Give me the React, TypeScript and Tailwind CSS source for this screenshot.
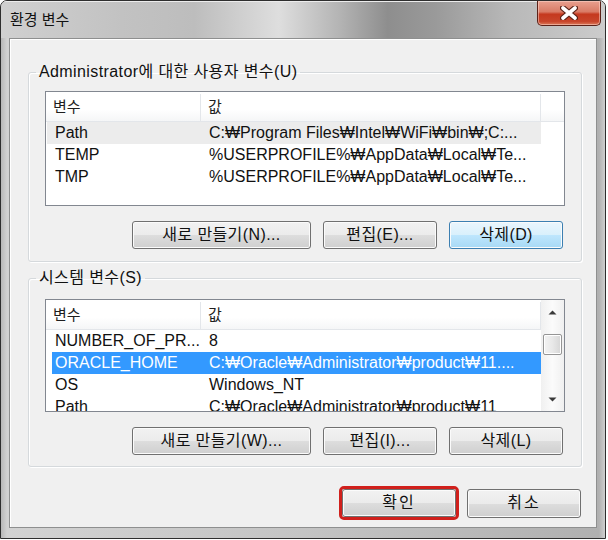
import { ReactNode } from "react";

const FONT = "font-['Liberation_Sans','Noto_Sans_CJK_KR',sans-serif]";

type BtnProps = {
  children: ReactNode;
  className?: string;
  hover?: boolean;
};

const Btn = ({ children, className = "", hover = false }: BtnProps) => (
  <button
    className={
      "flex h-[28px] items-center justify-center rounded-[3px] border text-[16px] tracking-[0.4px] text-[#111] shadow-[inset_0_0_0_1px_#fbfbfb] " +
      (hover
        ? "border-[#3c7fb1] bg-[linear-gradient(180deg,#eaf6fd_0%,#d9f0fc_50%,#bee6fd_51%,#a7d9f5_100%)] "
        : "border-[#707070] bg-[linear-gradient(180deg,#f2f2f2_0%,#ebebeb_50%,#dddddd_51%,#cfcfcf_100%)] ") +
      className
    }
  >
    {children}
  </button>
);

type Row = { name: string; value: string; selected?: boolean; hot?: boolean };

const userRows: Row[] = [
  { name: "Path", value: "C:₩Program Files₩Intel₩WiFi₩bin₩;C:...", hot: true },
  { name: "TEMP", value: "%USERPROFILE%₩AppData₩Local₩Te..." },
  { name: "TMP", value: "%USERPROFILE%₩AppData₩Local₩Te..." },
];

const systemRows: Row[] = [
  { name: "NUMBER_OF_PR...", value: "8" },
  { name: "ORACLE_HOME", value: "C:₩Oracle₩Administrator₩product₩11....", selected: true },
  { name: "OS", value: "Windows_NT" },
  { name: "Path", value: "C:₩Oracle₩Administrator₩product₩11" },
];

const Header = () => (
  <div className="flex h-[30px] shrink-0 border-b border-[#e3e6ea] bg-[linear-gradient(180deg,#ffffff_0%,#ffffff_60%,#f5f6f7_100%)] pt-[2px] text-[15px] text-[#1e1e1e]">
    <div className="flex w-[155px] items-center border-r border-[#e3e6ea] pl-[7px]">변수</div>
    <div className="flex w-[340px] items-center border-r border-[#e3e6ea] pl-[7px]">값</div>
  </div>
);

const ListRow = ({ row, inset }: { row: Row; inset: boolean }) => (
  <div
    className={
      "flex h-[22px] shrink-0 items-center text-[16px] leading-[22px] " +
      (inset ? "ml-[6px] w-[489px] " : "ml-[1px] w-[494px] ") +
      (row.selected ? "bg-[#3399ff] text-white " : row.hot ? "bg-[#ececec] text-[#111] " : "text-[#111] ")
    }
  >
    <div className={"shrink-0 whitespace-nowrap " + (inset ? "w-[149px] pl-[3px]" : "w-[154px] pl-[8px]")}>
      {row.name}
    </div>
    <div className="overflow-hidden whitespace-nowrap pl-[8px]">{row.value}</div>
  </div>
);

const Arrow = ({ up }: { up: boolean }) => (
  <svg width="9" height="5" viewBox="0 0 9 5">
    <path d={up ? "M0.5 4.5 L4.5 0.5 L8.5 4.5 Z" : "M0.5 0.5 L4.5 4.5 L8.5 0.5 Z"} fill="#3a3a3a" />
  </svg>
);

const ScrollBar = () => (
  <div className="flex w-[23px] shrink-0 flex-col items-center bg-[linear-gradient(90deg,#f0f0f0_0%,#fbfbfb_50%,#f0f0f0_100%)]">
    <div className="flex h-[24px] items-center justify-center">
      <Arrow up />
    </div>
    <div className="mt-[10px] h-[21px] w-[19px] rounded-[2px] border border-[#959595] bg-[linear-gradient(90deg,#f3f3f3_0%,#e8e8e8_50%,#d6d6d6_100%)] shadow-[inset_0_0_0_1px_#ffffff]" />
    <div className="flex-1" />
    <div className="flex h-[24px] items-center justify-center">
      <Arrow up={false} />
    </div>
  </div>
);

const Group = ({ label, children, className = "" }: { label: string; children: ReactNode; className?: string }) => (
  <fieldset
    className={
      "ml-[18px] mr-[14px] rounded-[3px] border border-[#d5d9dc] shadow-[inset_1px_1px_0_#ffffff,1px_1px_0_#ffffff] " +
      className
    }
  >
    <legend className="ml-[7px] px-[3px] text-[16px] leading-[18px] tracking-[0.4px] text-[#111]">{label}</legend>
    {children}
  </fieldset>
);

export default function App() {
  return (
    <div className={"h-[540px] w-[608px] bg-white " + FONT}>
      <div className="flex h-[539px] w-[606px] flex-col overflow-hidden rounded-t-[7px] border border-[#2e2e2e] bg-[linear-gradient(90deg,#b8b8b8_0%,#d2d2d2_1%,#c4c4c4_50%,#b0b0b0_99%,#cfcfcf_100%)]">
        {/* title bar */}
        <div className="flex h-[37px] shrink-0 items-start justify-between bg-[linear-gradient(90deg,#d0d0d0_0%,#c2c2c2_20%,#bdbdbd_32%,#dedede_46%,#b4b4b4_56%,#8e8e8e_64%,#9a9a9a_72%,#b8b8b8_84%,#cccccc_100%)] shadow-[inset_0_1px_0_#ececec]">
          <span className="pl-[9px] pt-[10px] text-[15px] leading-[18px] text-[#111]">환경 변수</span>
          <div className="mr-[4px] flex h-[25px] w-[64px] items-center justify-center rounded-b-[5px] border border-t-0 border-[#5b2219] bg-[linear-gradient(180deg,#e8a08f_0%,#d97b66_45%,#c5391f_55%,#c8452b_85%,#db7a5a_100%)] shadow-[inset_0_0_0_1px_rgba(255,220,210,0.5)]">
            <svg width="18" height="14" viewBox="0 0 18 14">
              <path d="M3 2 L15 12 M15 2 L3 12" stroke="#5a2318" strokeWidth="6" strokeLinecap="round" />
              <path d="M3 2 L15 12 M15 2 L3 12" stroke="#ffffff" strokeWidth="3.6" strokeLinecap="round" />
            </svg>
          </div>
        </div>

        {/* frame body */}
        <div className="flex flex-1 flex-col px-[8px] pb-[10px]">
          <div className="flex flex-1 flex-col border border-[#8e8f8f] bg-[#f0f0f0] shadow-[inset_1px_1px_0_#ffffff]">
            <Group label="Administrator에 대한 사용자 변수(U)" className="mt-[24px] pb-[12px]">
              <div className="ml-[16px] mt-[10px] flex h-[115px] w-[520px] overflow-hidden border border-[#828790] bg-white">
                <div className="flex w-[495px] flex-col">
                  <Header />
                  {userRows.map((r) => (
                    <ListRow key={r.name} row={r} inset={false} />
                  ))}
                </div>
                <div className="h-[30px] flex-1 border-b border-[#e3e6ea] bg-[linear-gradient(180deg,#ffffff_0%,#ffffff_60%,#f5f6f7_100%)]" />
              </div>
              <div className="ml-[16px] mt-[15px] flex w-[520px] justify-end gap-[12px] pr-[2px]">
                <Btn className="w-[179px]">새로 만들기(N)...</Btn>
                <Btn className="w-[114px]">편집(E)...</Btn>
                <Btn className="w-[114px]" hover>
                  삭제(D)
                </Btn>
              </div>
            </Group>

            <Group label="시스템 변수(S)" className="mt-[7px] pb-[11px]">
              <div className="ml-[16px] mt-[12px] flex h-[113px] w-[520px] overflow-hidden border border-[#828790] bg-white">
                <div className="flex w-[495px] flex-col overflow-hidden">
                  <Header />
                  {systemRows.map((r) => (
                    <ListRow key={r.name} row={r} inset />
                  ))}
                </div>
                <ScrollBar />
              </div>
              <div className="ml-[16px] mt-[15px] flex w-[520px] justify-end gap-[12px] pr-[2px]">
                <Btn className="w-[179px]">새로 만들기(W)...</Btn>
                <Btn className="w-[114px]">편집(I)...</Btn>
                <Btn className="w-[114px]">삭제(L)</Btn>
              </div>
            </Group>

            <div className="mr-[15px] mt-[19px] flex items-center justify-end gap-[8px]">
              <div className="rounded-[5px] border-[3px] border-[#d0201c]">
                <Btn className="w-[114px] border-[#3c7fb1] tracking-[2px] shadow-[inset_0_0_0_1px_#cfe9f8]">확인</Btn>
              </div>
              <Btn className="h-[29px] w-[114px] tracking-[2px]">취소</Btn>
            </div>
          </div>
        </div>
      </div>
    </div>
  );
}
